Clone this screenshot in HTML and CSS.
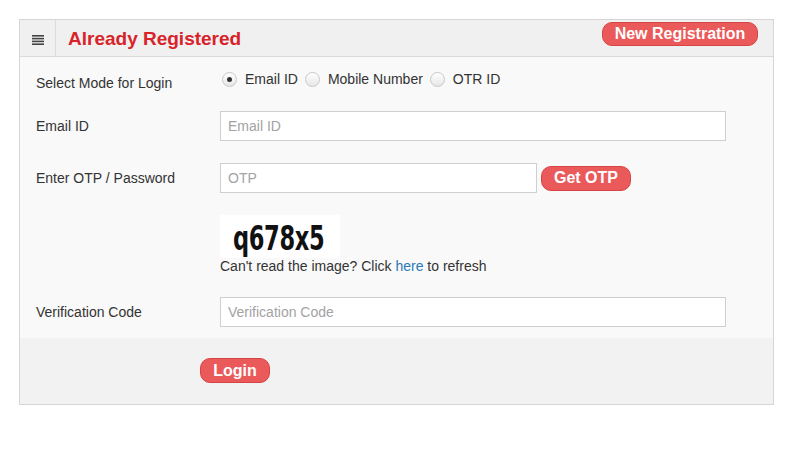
FILE: index.html
```html
<!DOCTYPE html>
<html lang="en">
<head>
  <meta charset="UTF-8" />
  <title>Already Registered</title>
  <link rel="stylesheet" href="styles.css">
</head>
<body>

  <div class="panel">
    <div class="panel-head">
      <div class="menu-icon">
        <svg width="12" height="10" viewBox="0 0 12 10">
          <rect x="0" y="0" width="12" height="1.6" fill="#444"/>
          <rect x="0" y="2.8" width="12" height="1.6" fill="#444"/>
          <rect x="0" y="5.6" width="12" height="1.6" fill="#444"/>
          <rect x="0" y="8.4" width="12" height="1.6" fill="#444"/>
        </svg>
      </div>
      <h2>Already Registered</h2>
      <button class="btn btn-new">New Registration</button>
    </div>

    <form class="panel-body">
      <div class="row row-mode">
        <label class="row-label">Select Mode for Login</label>
        <div class="modes">
          <span class="radio checked"></span><span class="mode">Email ID</span>
          <span class="radio"></span><span class="mode">Mobile Number</span>
          <span class="radio"></span><span class="mode">OTR ID</span>
        </div>
      </div>

      <div class="row row-email">
        <label class="row-label">Email ID</label>
        <input type="text" class="field field-wide" placeholder="Email ID" />
      </div>

      <div class="row row-otp">
        <label class="row-label">Enter OTP / Password</label>
        <input type="text" class="field field-otp" placeholder="OTP" />
        <button type="button" class="btn btn-otp">Get OTP</button>
      </div>

      <div class="captcha">
        <div class="captcha-img"><span>q678x5</span></div>
        <p>Can't read the image? Click <a href="#">here</a> to refresh</p>
      </div>

      <div class="row row-verify">
        <label class="row-label">Verification Code</label>
        <input type="text" class="field field-wide" placeholder="Verification Code" />
      </div>
    </form>

    <div class="panel-foot">
      <button class="btn btn-login">Login</button>
    </div>
  </div>

</body>
</html>
```

FILE: styles.css
```css
* {
  box-sizing: border-box;
  margin: 0;
  padding: 0;
  font-family: 'Liberation Sans', Arial, sans-serif;
}

body {
  background: #fff;
  color: #333;
}

.panel {
  margin: 19px 0 0 19px;
  width: 755px;
  border: 1px solid #d6d6d6;
  background: #f9f9f9;
}

.panel-head {
  display: flex;
  align-items: center;
  height: 37px;
  background: #f0f0f0;
  border-bottom: 1px solid #d9d9d9;
}

.menu-icon {
  width: 36px;
  height: 100%;
  display: flex;
  align-items: center;
  justify-content: center;
  border-right: 1px solid #dcdcdc;
  padding-top: 3px;
}

.panel-head h2 {
  flex: 1;
  margin-left: 12px;
  font-size: 19px;
  font-weight: bold;
  color: #d8232a;
  padding-top: 2px;
}

.btn {
  border: 1px solid #d84444;
  background: #ea5a5a;
  color: #fff;
  font-weight: bold;
  font-size: 16px;
  border-radius: 10px;
  cursor: pointer;
}

.btn-new {
  width: 156px;
  height: 24px;
  margin-right: 15px;
  margin-top: -8px;
}

.panel-body {
  padding: 7px 0 11px 0;
}

.row {
  display: flex;
  align-items: center;
  height: 30px;
}

.row-label {
  width: 200px;
  padding-left: 16px;
  font-size: 14px;
  color: #333;
}

.row-mode .row-label {
  padding-top: 7px;
}

.row-email {
  margin-top: 17px;
}

.row-otp {
  margin-top: 22px;
}

.row-verify {
  margin-top: 23px;
}

.modes {
  display: flex;
  align-items: center;
  font-size: 14px;
  color: #333;
}

.radio {
  width: 15px;
  height: 15px;
  border-radius: 50%;
  border: 1px solid #c8c8c8;
  background: linear-gradient(#fff, #e6e6e6);
  margin-right: 8px;
  margin-left: 2px;
  display: inline-flex;
  align-items: center;
  justify-content: center;
}

.radio.checked::after {
  content: '';
  width: 5px;
  height: 5px;
  border-radius: 50%;
  background: #333;
}

.mode {
  margin-right: 5px;
}

.field {
  height: 30px;
  border: 1px solid #cfcfcf;
  background: #fff;
  padding: 0 7px;
  font-size: 14px;
  color: #333;
}

.field::placeholder {
  color: #a3a3a3;
}

.field-wide {
  width: 506px;
}

.field-otp {
  width: 317px;
}

.btn-otp {
  width: 90px;
  height: 25px;
  margin-left: 4px;
}

.captcha {
  margin: 22px 0 0 200px;
}

.captcha-img {
  width: 120px;
  height: 43px;
  background: #fff;
  padding: 7px 0 0 13px;
}

.captcha-img span {
  display: inline-block;
  font-family: 'DejaVu Sans Condensed', 'DejaVu Sans', sans-serif;
  font-weight: bold;
  font-size: 33px;
  line-height: 33px;
  color: #111;
  letter-spacing: -0.5px;
  transform: scaleX(0.76);
  transform-origin: left center;
}

.captcha p {
  font-size: 14px;
  color: #333;
  line-height: 16px;
}

.captcha a {
  color: #2a7ab8;
  text-decoration: none;
}

.panel-foot {
  height: 66px;
  background: #f2f2f2;
  padding: 20px 0 0 180px;
}

.btn-login {
  width: 70px;
  height: 25px;
}
```
